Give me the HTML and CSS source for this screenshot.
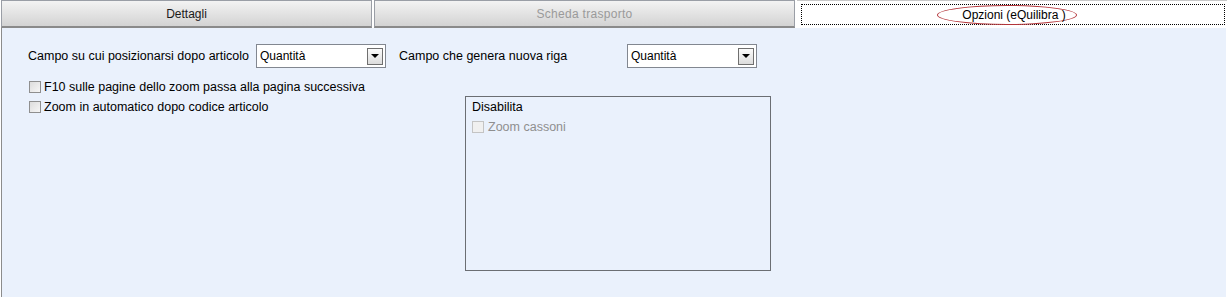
FILE: index.html
```html
<!DOCTYPE html>
<html lang="it">
<head>
    <meta charset="UTF-8">
    <title>Opzioni (eQuilibra)</title>
    <link rel="stylesheet" href="styles.css">
</head>
<body>
    <!-- Tabs -->
    <div class="tabs">
        <div class="tab">Dettagli</div>
        <div class="tab tab-disabled">Scheda trasporto</div>
        <div class="tab tab-active">
            <div class="focus"><span class="ring">Opzioni (eQuilibra )</span></div>
        </div>
    </div>

    <!-- Panel -->
    <div class="panel">
        <div class="field-row">
            <label class="label label-first">Campo su cui posizionarsi dopo articolo</label>
            <div class="combo">
                <span class="combo-text">Quantità</span>
                <span class="combo-btn"><span class="arrow"></span></span>
            </div>
            <label class="label label-second">Campo che genera nuova riga</label>
            <div class="combo">
                <span class="combo-text">Quantità</span>
                <span class="combo-btn"><span class="arrow"></span></span>
            </div>
        </div>

        <div class="check-row">
            <span class="check"></span>
            <span>F10 sulle pagine dello zoom passa alla pagina successiva</span>
        </div>

        <div class="split">
            <div class="check-row">
                <span class="check"></span>
                <span>Zoom in automatico dopo codice articolo</span>
            </div>
            <div class="group">
                <div class="group-title">Disabilita</div>
                <div class="check-row disabled">
                    <span class="check"></span>
                    <span>Zoom cassoni</span>
                </div>
            </div>
        </div>
    </div>
</body>
</html>
```

FILE: styles.css
```css
body {
    margin: 0;
    font-family: "Liberation Sans", Arial, sans-serif;
    font-size: 12px;
    color: #000;
    background-color: #fff;
}

.tabs {
    display: flex;
    gap: 2px;
    height: 28px;
    padding-left: 1px;
}

.tab {
    box-sizing: border-box;
    width: 371px;
    height: 28px;
    border: 1px solid #9a9ea6;
    border-bottom: 2px solid #8a8a8a;
    background: linear-gradient(#f3f3f3, #e6e6e6 40%, #d3d3d3);
    text-align: center;
    line-height: 26px;
    color: #1a1a1a;
}

.tab-disabled {
    width: 421px;
    color: #9a9a9a;
    letter-spacing: 0.3px;
}

.tab-active {
    flex: 1;
    background: #fff;
    border: none;
    border-top: 1px solid #c8c8c8;
    padding: 3px 2px 3px 4px;
}

.focus {
    box-sizing: border-box;
    height: 21px;
    border: 1px dotted #000;
    line-height: 19px;
    color: #000;
}

.ring {
    display: inline-block;
    box-sizing: border-box;
    height: 20px;
    line-height: 18px;
    padding: 0 10px 0 24px;
    border: 1px solid #b3353a;
    border-radius: 50%;
    margin-left: -12px;
    vertical-align: top;
}

.panel {
    height: 269px;
    margin-left: 1px;
    margin-right: 1px;
    border-left: 1px solid #8c8c8c;
    background-color: #eaf1fc;
    padding: 16px 0 0 26px;
    box-sizing: border-box;
    font-size: 12.5px;
}

.field-row {
    display: flex;
    align-items: center;
    height: 24px;
}

.label-first {
    width: 228px;
}

.label-second {
    width: 228px;
    margin-left: 13px;
}

.combo {
    box-sizing: border-box;
    width: 130px;
    height: 24px;
    border: 1px solid #828790;
    background: #fff;
    display: flex;
    align-items: center;
    justify-content: space-between;
    padding: 0 2px 0 3px;
    font-size: 12px;
}

.combo-btn {
    box-sizing: border-box;
    width: 16px;
    height: 17px;
    border: 1px solid #6f6f6f;
    background: linear-gradient(#fbfbfb, #dcdcdc);
    display: flex;
    align-items: center;
    justify-content: center;
}

.arrow {
    width: 0;
    height: 0;
    border-left: 4px solid transparent;
    border-right: 4px solid transparent;
    border-top: 4px solid #000;
}

.check-row {
    display: flex;
    align-items: center;
    gap: 3px;
    height: 20px;
    padding-left: 1px;
}

.field-row + .check-row {
    margin-top: 9px;
}

.check {
    box-sizing: border-box;
    width: 12px;
    height: 12px;
    border: 1px solid #8f8f8f;
    background: linear-gradient(135deg, #dcdcdc, #f6f6f6);
}

.split {
    display: flex;
    align-items: flex-start;
}

.split > .check-row {
    width: 436px;
}

.group {
    box-sizing: border-box;
    width: 306px;
    height: 175px;
    margin-top: -1px;
    border: 1px solid #6b6e73;
    padding: 3px 0 0 6px;
}

.group-title {
    height: 17px;
    line-height: 14px;
}

.group .check-row {
    padding-left: 0;
    gap: 4px;
}

.disabled {
    color: #8f8f8f;
}

.disabled .check {
    border-color: #c4c4c4;
    background: #f0f0f0;
}
```
